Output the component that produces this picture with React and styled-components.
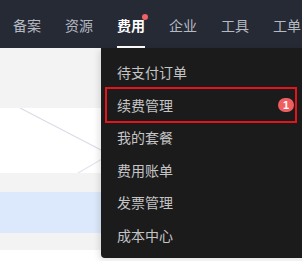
import React from 'react';
import styled, { createGlobalStyle } from 'styled-components';

const navItems = [
  { key: 'beian', label: '备案' },
  { key: 'res', label: '资源' },
  { key: 'fee', label: '费用', active: true, dot: true },
  { key: 'ent', label: '企业' },
  { key: 'tool', label: '工具' },
  { key: 'ticket', label: '工单' },
];

const menuItems = [
  { key: 'pending', label: '待支付订单' },
  { key: 'renew', label: '续费管理', badge: 1, marked: true },
  { key: 'plan', label: '我的套餐' },
  { key: 'bill', label: '费用账单' },
  { key: 'invoice', label: '发票管理' },
  { key: 'cost', label: '成本中心' },
];

const App = () => (
  <>
    <GlobalStyle />
    <Page>
      <TopBar>
        {navItems.map((item) => (
          <NavItem key={item.key} $active={item.active}>
            {item.label}
            {item.dot && <NavDot />}
          </NavItem>
        ))}
      </TopBar>
      <Content>
        <GrayBand $height={60} />
        <ChartArea>
          <svg width="100%" height="65" viewBox="0 0 302 65" preserveAspectRatio="none">
            <line x1="20" y1="0" x2="130" y2="57" stroke="#dcdce9" strokeWidth="1.2" />
            <line x1="78" y1="65" x2="133" y2="33" stroke="#e4e4ee" strokeWidth="1.2" />
          </svg>
        </ChartArea>
        <GrayBand $height={19} />
        <SelectedRow />
        <GrayBand $height={17} />
      </Content>
      <Dropdown>
        {menuItems.map((item) => (
          <MenuItem key={item.key} $marked={item.marked}>
            <span>{item.label}</span>
            {item.badge && <Badge>{item.badge}</Badge>}
          </MenuItem>
        ))}
      </Dropdown>
    </Page>
  </>
);

const GlobalStyle = createGlobalStyle`
  html, body {
    margin: 0;
    padding: 0;
    background: #ffffff;
  }
  body {
    font-family: "Noto Sans CJK SC", "Noto Sans", sans-serif;
  }
`;

const Page = styled.div`
  position: relative;
  width: 302px;
  height: 261px;
  overflow: hidden;
  background: #ffffff;
`;

const TopBar = styled.div`
  display: flex;
  align-items: stretch;
  gap: 24px;
  height: 48px;
  padding-left: 13px;
  background: #262a35;
  white-space: nowrap;
`;

const NavItem = styled.div`
  position: relative;
  display: flex;
  align-items: center;
  font-size: 14px;
  line-height: 20px;
  padding-top: 1px;
  color: ${({ $active }) => ($active ? '#ffffff' : '#b5b9c2')};
  font-weight: ${({ $active }) => ($active ? 600 : 400)};
  box-sizing: border-box;
  border-bottom: 2px solid ${({ $active }) => ($active ? '#ffffff' : 'transparent')};
  border-top: 2px solid transparent;
`;

const NavDot = styled.span`
  position: absolute;
  top: 12px;
  right: -3px;
  width: 6px;
  height: 6px;
  border-radius: 50%;
  background: #f0626a;
`;

const Content = styled.div`
  display: flex;
  flex-direction: column;
`;

const GrayBand = styled.div`
  height: ${({ $height }) => $height}px;
  background: #f3f3f4;
`;

const ChartArea = styled.div`
  height: 65px;
  background: #ffffff;

  svg {
    display: block;
  }
`;

const SelectedRow = styled.div`
  height: 41px;
  background: #dce8fb;
`;

const Dropdown = styled.div`
  position: absolute;
  top: 48px;
  left: 101px;
  width: 210px;
  padding: 8px 0 7px;
  background: #1b1b1c;
  border-radius: 0 0 4px 4px;
  box-shadow: -2px 2px 6px rgba(0, 0, 0, 0.12);
`;

const MenuItem = styled.div`
  display: flex;
  align-items: center;
  justify-content: space-between;
  height: 32.5px;
  padding: 0 15px 0 16px;
  font-size: 14px;
  color: #c4c4c4;
  box-sizing: border-box;
  position: relative;

  ${({ $marked }) =>
    $marked &&
    `
    &::after {
      content: '';
      position: absolute;
      left: 4px;
      top: -2px;
      width: 192px;
      height: 36px;
      border: 2px solid #e3141c;
      box-sizing: border-box;
    }
  `}
`;

const Badge = styled.span`
  display: inline-flex;
  align-items: center;
  justify-content: center;
  width: 16px;
  height: 14px;
  margin-right: 2px;
  border-radius: 7px;
  background: #ef5f60;
  color: #ffffff;
  font-family: "Liberation Sans", Arial, sans-serif;
  font-size: 11px;
  font-weight: 700;
`;

export default App;
